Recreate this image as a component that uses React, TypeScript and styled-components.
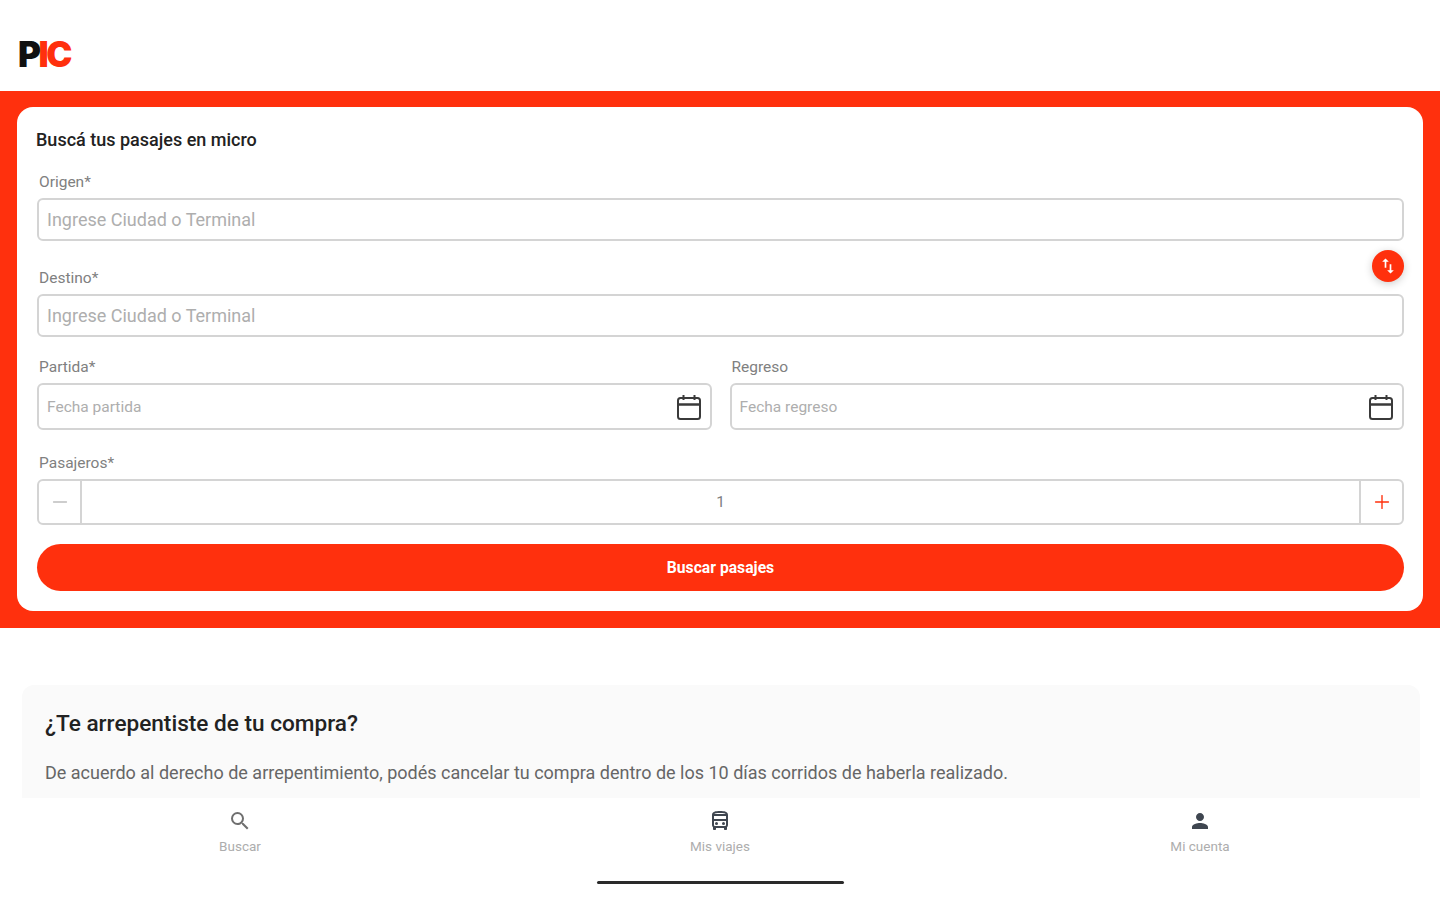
import React from 'react';
import styled, { createGlobalStyle } from 'styled-components';
import { MdSearch, MdOutlineDirectionsBus, MdPerson, MdSwapVert } from 'react-icons/md';
import { Plus, Minus } from 'lucide-react';

const RED = '#ff300d';

const GlobalStyle = createGlobalStyle`
  * {
    box-sizing: border-box;
  }

  html,
  body {
    margin: 0;
    background: #ffffff;
    font-family: 'Roboto', 'Liberation Sans', sans-serif;
  }
`;

const Page = styled.div`
  display: flex;
  flex-direction: column;
  width: 1440px;
  height: 900px;
  overflow: hidden;
  background: #ffffff;
`;

const Header = styled.header`
  display: flex;
  align-items: center;
  height: 91px;
  padding: 17px 0 0 18px;
`;

const Logo = styled.div`
  position: relative;
  font-family: 'Inter', sans-serif;
  font-size: 35px;
  font-weight: 900;
  letter-spacing: -2.5px;
  line-height: 1;
  color: #111111;

  span {
    color: ${RED};
  }

  /* muesca blanca de la C */
  &::after {
    content: '';
    position: absolute;
    left: 44px;
    top: 16px;
    width: 9px;
    height: 2px;
    background: #ffffff;
  }
`;

const SearchBand = styled.section`
  padding: 16px 17px 17px;
  background: ${RED};
`;

const Card = styled.form`
  display: flex;
  flex-direction: column;
  height: 504px;
  padding: 23px 19px 0 20px;
  border-radius: 16px;
  background: #ffffff;
`;

const CardTitle = styled.h2`
  margin: 0 0 24px -1px;
  font-size: 18px;
  line-height: 19px;
  font-weight: 500;
  color: #222222;
`;

const Field = styled.div<{ $gap?: number }>`
  position: relative;
  margin-bottom: ${(props) => props.$gap ?? 0}px;
`;

const DateField = styled(Field)`
  flex: 1;
`;

const Label = styled.label`
  display: block;
  margin: 0 0 7px 2px;
  font-size: 15.5px;
  line-height: 18px;
  color: #808080;
`;

const TextBox = styled.div<{ $height: number }>`
  display: flex;
  align-items: center;
  justify-content: space-between;
  height: ${(props) => props.$height}px;
  padding: 0 8px;
  border: 2px solid #d4d4d4;
  border-radius: 6px;
  background: #ffffff;
`;

const Placeholder = styled.span<{ $small?: boolean }>`
  font-size: ${(props) => (props.$small ? 15.5 : 18)}px;
  color: #aeaeae;
`;

const SwapButton = styled.button`
  position: absolute;
  top: -19px;
  right: 0;
  display: flex;
  align-items: center;
  justify-content: center;
  width: 32px;
  height: 32px;
  padding: 0;
  border: 0;
  border-radius: 50%;
  background: ${RED};
  color: #ffffff;
  box-shadow: 0 2px 8px rgba(0, 0, 0, 0.2);
`;

const DateRow = styled.div`
  display: flex;
  gap: 18px;
  margin-bottom: 24px;
`;

const Stepper = styled.div`
  display: flex;
  align-items: stretch;
  height: 46px;
  border: 2px solid #d4d4d4;
  border-radius: 6px;
`;

const StepButton = styled.div<{ $color: string; $side: 'left' | 'right' }>`
  display: flex;
  align-items: center;
  justify-content: center;
  width: 43px;
  color: ${(props) => props.$color};
  ${(props) => (props.$side === 'left' ? 'border-right' : 'border-left')}: 2px solid #d4d4d4;
`;

const StepValue = styled.div`
  flex: 1;
  display: flex;
  align-items: center;
  justify-content: center;
  font-size: 15.5px;
  color: #808080;
`;

const SubmitButton = styled.button`
  height: 47px;
  margin-top: 19px;
  border: 0;
  border-radius: 24px;
  background: ${RED};
  color: #ffffff;
  font-family: inherit;
  font-size: 15.7px;
  font-weight: 700;
`;

const Content = styled.main`
  flex: 1;
  min-height: 0;
  overflow: hidden;
  padding: 57px 20px 0 22px;
`;

const InfoCard = styled.article`
  height: 200px;
  padding: 25px 23px;
  border-radius: 12px;
  background: #fafafa;
`;

const InfoTitle = styled.h3`
  margin: 0 0 25px;
  font-size: 22.6px;
  line-height: 28px;
  font-weight: 500;
  color: #222222;
`;

const InfoText = styled.p`
  margin: 0;
  font-size: 18px;
  line-height: 20px;
  color: #666666;
`;

const BottomNav = styled.nav`
  position: relative;
  display: grid;
  grid-template-columns: repeat(3, 1fr);
  height: 102px;
  padding-top: 11px;
  background: #ffffff;
`;

const NavItem = styled.div`
  display: flex;
  flex-direction: column;
  align-items: center;
  gap: 5px;
`;

const NavIcon = styled.div<{ $color: string }>`
  display: flex;
  height: 24px;
  color: ${(props) => props.$color};
`;

const NavLabel = styled.span`
  font-size: 13.5px;
  line-height: 16px;
  color: #adadad;
`;

const HomeIndicator = styled.div`
  position: absolute;
  left: 597px;
  bottom: 16px;
  width: 247px;
  height: 3px;
  border-radius: 2px;
  background: #2a2a2a;
`;

const CalendarIcon: React.FC = () => (
  <svg width="26" height="28" viewBox="0 0 26 28" fill="none" stroke="#3a3a3a" strokeWidth="2">
    <rect x="2" y="5" width="22" height="21" rx="2.5" />
    <path d="M2 11.5h22" strokeWidth="2.5" />
    <path d="M7.5 2v5M18.5 2v5" />
  </svg>
);

const App: React.FC = () => {
  return (
    <Page>
      <GlobalStyle />
      <Header>
        <Logo>
          P<span>IC</span>
        </Logo>
      </Header>

      <SearchBand>
        <Card>
          <CardTitle>Buscá tus pasajes en micro</CardTitle>
          <Field $gap={28}>
            <Label>Origen*</Label>
            <TextBox $height={43}>
              <Placeholder>Ingrese Ciudad o Terminal</Placeholder>
            </TextBox>
          </Field>
          <Field $gap={21}>
            <SwapButton type="button">
              <MdSwapVert size={20} />
            </SwapButton>
            <Label>Destino*</Label>
            <TextBox $height={43}>
              <Placeholder>Ingrese Ciudad o Terminal</Placeholder>
            </TextBox>
          </Field>
          <DateRow>
            <DateField>
              <Label>Partida*</Label>
              <TextBox $height={47}>
                <Placeholder $small>Fecha partida</Placeholder>
                <CalendarIcon />
              </TextBox>
            </DateField>
            <DateField>
              <Label>Regreso</Label>
              <TextBox $height={47}>
                <Placeholder $small>Fecha regreso</Placeholder>
                <CalendarIcon />
              </TextBox>
            </DateField>
          </DateRow>
          <Field>
            <Label>Pasajeros*</Label>
            <Stepper>
              <StepButton $side="left" $color="#bdbdbd">
                <Minus size={22} strokeWidth={1.5} />
              </StepButton>
              <StepValue>1</StepValue>
              <StepButton $side="right" $color={RED}>
                <Plus size={22} strokeWidth={1.5} />
              </StepButton>
            </Stepper>
          </Field>
          <SubmitButton type="button">Buscar pasajes</SubmitButton>
        </Card>
      </SearchBand>

      <Content>
        <InfoCard>
          <InfoTitle>¿Te arrepentiste de tu compra?</InfoTitle>
          <InfoText>
            De acuerdo al derecho de arrepentimiento, podés cancelar tu compra dentro de los 10 días
            corridos de haberla realizado.
          </InfoText>
        </InfoCard>
      </Content>

      <BottomNav>
        <NavItem>
          <NavIcon $color="#6f6f6f">
            <MdSearch size={24} />
          </NavIcon>
          <NavLabel>Buscar</NavLabel>
        </NavItem>
        <NavItem>
          <NavIcon $color="#3f4650">
            <MdOutlineDirectionsBus size={24} />
          </NavIcon>
          <NavLabel>Mis viajes</NavLabel>
        </NavItem>
        <NavItem>
          <NavIcon $color="#3f4650">
            <MdPerson size={24} />
          </NavIcon>
          <NavLabel>Mi cuenta</NavLabel>
        </NavItem>
        <HomeIndicator />
      </BottomNav>
    </Page>
  );
};

export default App;
